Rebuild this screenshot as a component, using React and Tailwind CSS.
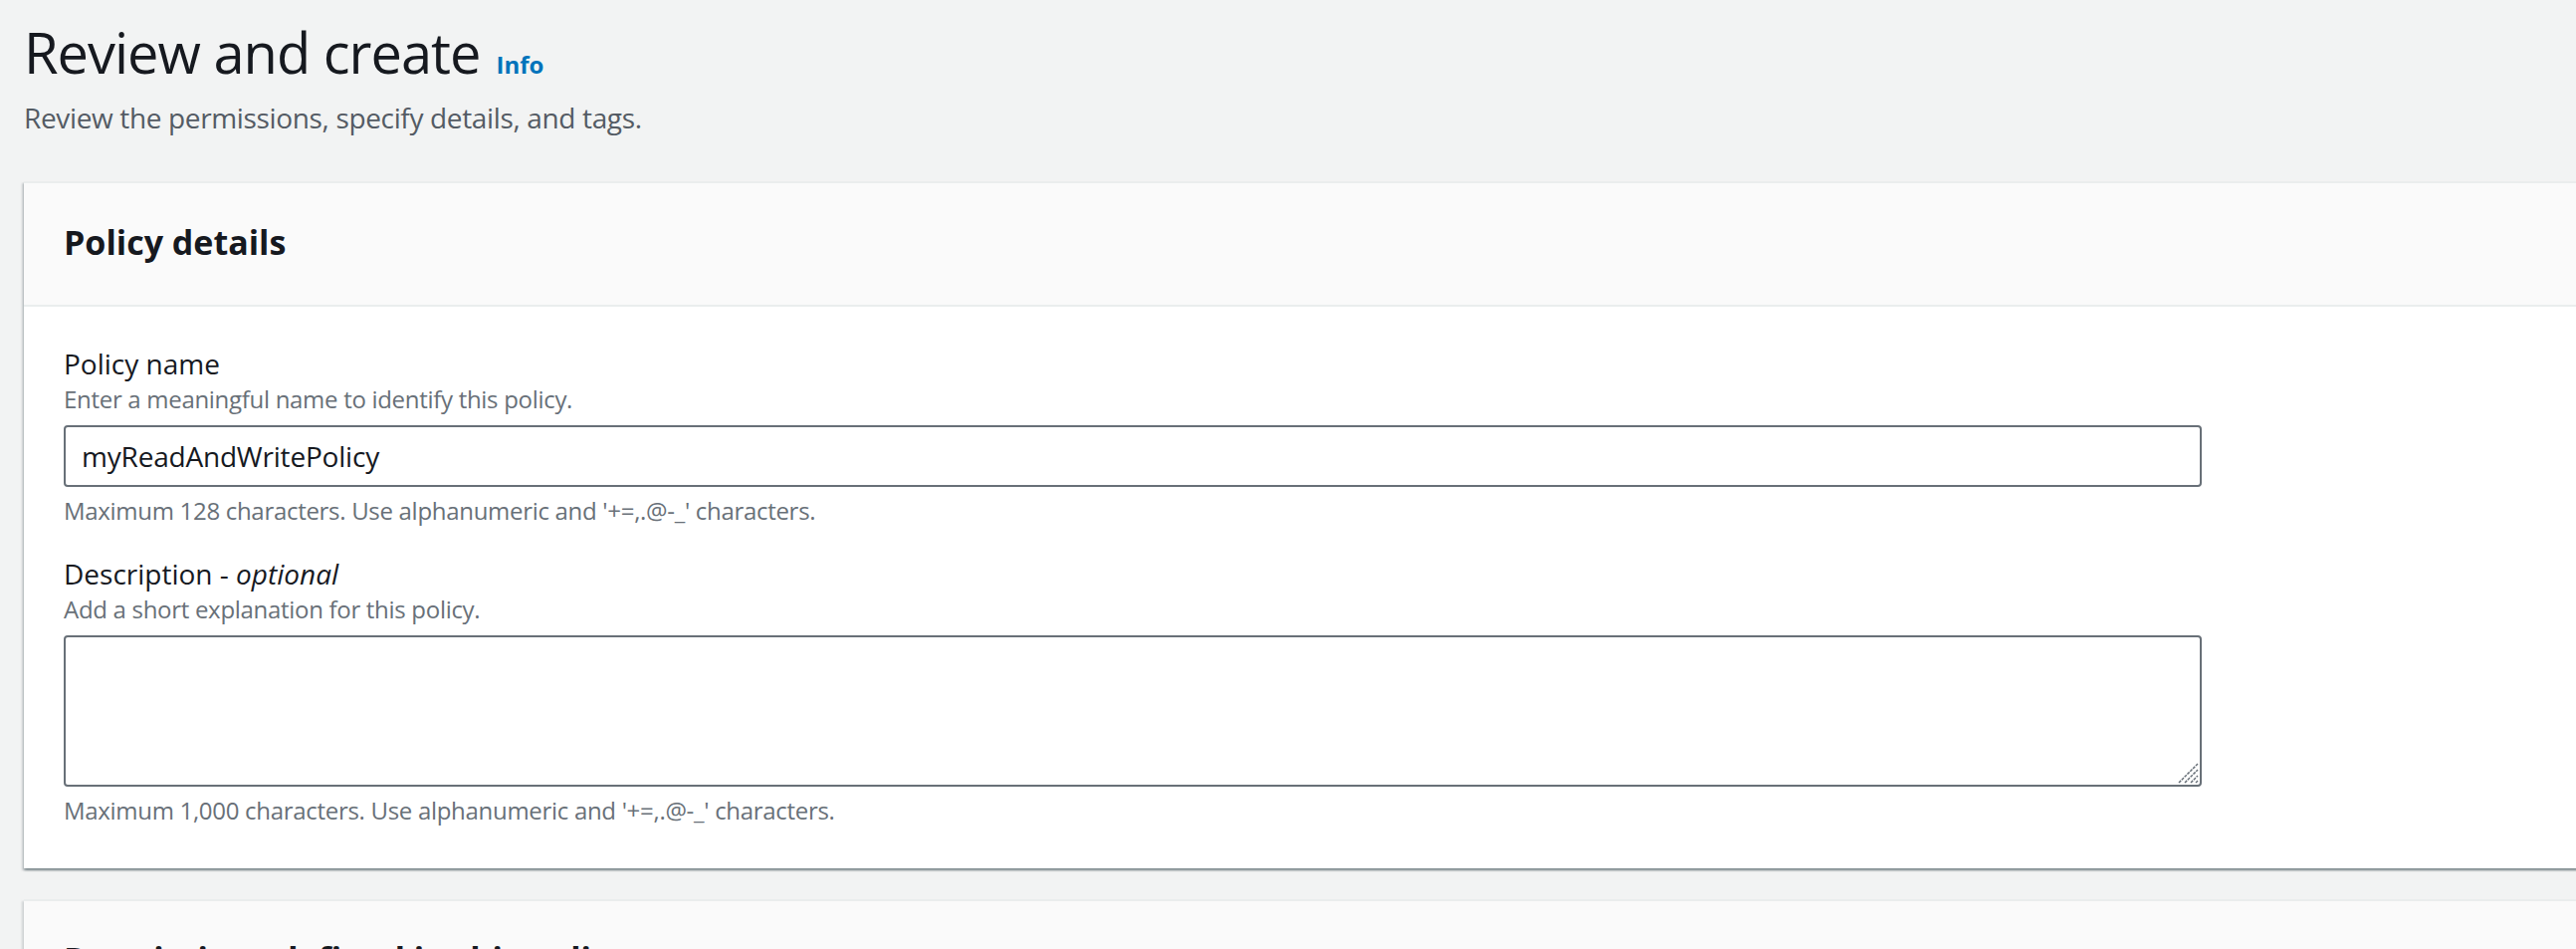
import React from "react";

const FieldHint = ({ children }) => (
  <div className="text-[24px] leading-[32px] tracking-[-0.3px] text-[#687078]">{children}</div>
);

const PolicyDetails = () => {
  return (
    <div className="w-[2640px] bg-white border-t-2 border-[#eaeded] shadow-[0_2px_2px_0_rgba(0,28,36,0.3),2px_2px_2px_0_rgba(0,28,36,0.15),-2px_2px_2px_0_rgba(0,28,36,0.15)]">
      {/* Header */}
      <div className="bg-[#fafafa] border-b-2 border-[#eaeded] px-[40px] pt-[37px] pb-[41px]">
        <h2 className="text-[34px] leading-[44px] font-bold text-[#16191f]">Policy details</h2>
      </div>

      {/* Body */}
      <div className="px-[40px] pt-[37px] pb-[42px]">
        <div className="text-[28px] leading-[40px] text-[#16191f]">Policy name</div>
        <FieldHint>Enter a meaningful name to identify this policy.</FieldHint>
        <input
          type="text"
          defaultValue="myReadAndWritePolicy"
          className="mt-[10px] w-[2148px] h-[62px] border-2 border-[#687078] rounded-[4px] px-[16px] text-[28px] tracking-[-0.2px] text-[#16191f] bg-white outline-none"
        />
        <div className="mt-[8px]">
          <FieldHint>Maximum 128 characters. Use alphanumeric and '+=,.@-_' characters.</FieldHint>
        </div>

        <div className="mt-[27px] text-[28px] leading-[40px] text-[#16191f]">
          Description - <span className="italic">optional</span>
        </div>
        <FieldHint>Add a short explanation for this policy.</FieldHint>
        <div className="relative mt-[10px] w-[2148px]">
          <textarea className="block w-full h-[152px] border-2 border-[#687078] rounded-[4px] px-[16px] py-[8px] text-[28px] text-[#16191f] bg-white outline-none resize-none" />
          <svg className="absolute right-[3px] bottom-[3px]" width="22" height="22" viewBox="0 0 22 22">
            <g stroke="#687078" strokeWidth="1.5" strokeDasharray="3 1">
              <line x1="2" y1="21" x2="21" y2="2" />
              <line x1="8" y1="21" x2="21" y2="8" />
              <line x1="14" y1="21" x2="21" y2="14" />
              <line x1="19" y1="21" x2="21" y2="19" />
            </g>
          </svg>
        </div>
        <div className="mt-[8px]">
          <FieldHint>Maximum 1,000 characters. Use alphanumeric and '+=,.@-_' characters.</FieldHint>
        </div>
      </div>
    </div>
  );
};

const App = () => {
  return (
    <div className="w-full h-screen overflow-hidden bg-[#f2f3f3] font-['Open_Sans','Noto_Sans',sans-serif] pl-[24px]">
      {/* Page header */}
      <div className="pt-[16px] flex items-baseline gap-[16px]">
        <h1 className="text-[56px] leading-[72px] tracking-[-1px] text-[#16191f]">Review and create</h1>
        <a href="#" className="text-[24px] font-bold text-[#0073bb]">Info</a>
      </div>
      <p className="mt-[10px] text-[28px] leading-[40px] tracking-[-0.35px] text-[#545b64]">
        Review the permissions, specify details, and tags.
      </p>

      <div className="mt-[44px]">
        <PolicyDetails />
      </div>

      {/* Next container, cut off by the window */}
      <div className="mt-[31px] w-[2640px] bg-[#fafafa] border-t-2 border-[#eaeded] shadow-[-2px_2px_2px_0_rgba(0,28,36,0.15)] px-[40px] pt-[36px] pb-[41px]">
        <h2 className="text-[34px] leading-[44px] font-bold text-[#16191f]">Permissions defined in this policy</h2>
      </div>
    </div>
  );
};

export default App;
